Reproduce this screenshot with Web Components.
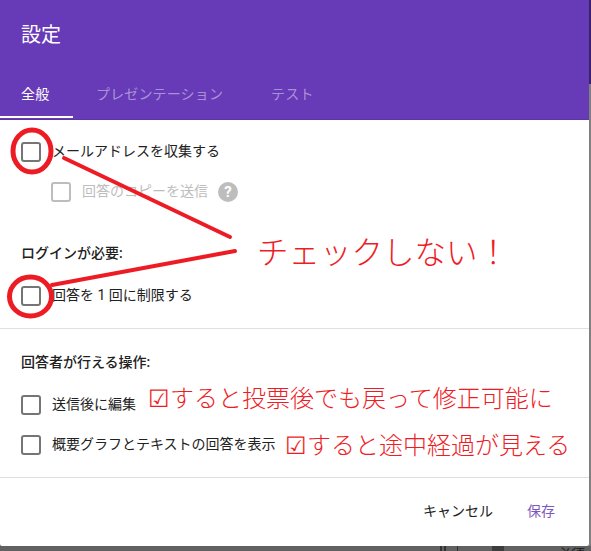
<!DOCTYPE html>
<html lang="ja"><head><meta charset="utf-8">
<style>
html,body{margin:0;height:551px;overflow:hidden;background:#616161}
body{font-family:Roboto,"Noto Sans CJK JP",sans-serif;position:relative}
</style></head><body>
<template id="cb-t"><style>
:host{display:flex;align-items:center;height:20px;font-size:14px;color:#212121;gap:var(--gap,11px)}
:host([disabled]){color:#bdbdbd}
.b{width:16px;height:16px;border:2px solid #757575;border-radius:3px;flex:none;background:#fff}
:host([disabled]) .b{border-color:#bdbdbd}
.t{margin-bottom:5px;white-space:nowrap}
</style><span class="b"></span><span class="t"><slot></slot></span><slot name="after"></slot></template>
<script>
class Base extends HTMLElement{constructor(){super();this.attachShadow({mode:'open'})}}
class FormCheck extends Base{constructor(){super();this.shadowRoot.append(document.getElementById('cb-t').content.cloneNode(true))}}
customElements.define('form-check',FormCheck);
class PageBackdrop extends Base{constructor(){super();this.shadowRoot.innerHTML=`<style>
:host{position:absolute;inset:0;overflow:hidden;background:#616161}
i{position:absolute;display:block}
span{position:absolute;left:557px;top:544px;font-size:14px;line-height:20px;color:#212121;white-space:nowrap}
</style>
<i style="left:589px;top:0;width:2px;height:84px;background:#3a2170"></i>
<i style="left:589px;top:84px;width:2px;height:462px;background:#808080"></i>
<i style="left:440px;top:546px;width:2px;height:5px;background:#333"></i>
<i style="left:444px;top:546px;width:2px;height:5px;background:#333"></i>
<i style="left:457px;top:546px;width:1px;height:5px;background:#333"></i>
<i style="left:492px;top:546px;width:12px;height:5px;background:#3d3d3d"></i>
<span>必須</span>`}}
customElements.define('page-backdrop',PageBackdrop);
class SettingsHeader extends Base{constructor(){super();this.shadowRoot.innerHTML=`<style>
:host{display:block;background:#673ab7;height:120px;box-sizing:border-box;color:#fff;border-bottom:1px solid #5e35a8}
h2{margin:0;font-weight:400;font-size:20px;line-height:24px;padding:23px 0 0 21px;height:56px;box-sizing:content-box}
nav{display:flex;height:40px;font-size:14px;letter-spacing:.15px;margin-top:-1px}
a{display:block;box-sizing:border-box;height:40px;padding-top:6px;line-height:20px;color:rgba(255,255,255,.45)}
a.on{color:#fff;width:73px;padding-left:21px;border-bottom:2px solid #fff}
a.p{margin-left:23px}a.t{margin-left:48px}
</style><h2>設定</h2><nav><a class="on">全般</a><a class="p">プレゼンテーション</a><a class="t">テスト</a></nav>`}}
customElements.define('settings-header',SettingsHeader);
class SettingsBody extends Base{constructor(){super();this.shadowRoot.innerHTML=`<style>
:host{display:block;height:358px;box-sizing:border-box;padding-top:22px;border-bottom:1px solid #e0e0e0}
.s{padding:0 21px}
.sub{margin:20px 0 0 30px}
.q{width:20px;height:20px;border-radius:50%;background:#bdbdbd;color:#fff;font:700 15px/20px Roboto,sans-serif;text-align:center;margin-left:-1px;flex:none}
.h{font-size:14px;font-weight:500;color:#212121;line-height:20px}
hr{border:0;border-top:1px solid #e0e0e0;margin:22px 0 0}
</style>
<div class="s"><form-check>メールアドレスを収集する</form-check>
<form-check class="sub" disabled>回答のコピーを送信<span class="q" slot="after">?</span></form-check>
<div class="h" style="margin-top:41px">ログインが必要:</div>
<form-check style="margin-top:23px">回答を 1 回に制限する</form-check></div>
<hr>
<div class="s"><div class="h" style="margin-top:23px">回答者が行える操作:</div>
<form-check style="margin-top:23px">送信後に編集</form-check>
<form-check style="margin-top:20px">概要グラフとテキストの回答を表示</form-check></div>`}}
customElements.define('settings-body',SettingsBody);
class SettingsFooter extends Base{constructor(){super();this.shadowRoot.innerHTML=`<style>
:host{display:flex;justify-content:flex-end;align-items:center;height:66px;box-sizing:border-box;padding:0 34px 2px 0;font-size:14px;gap:34px;color:#212121}
.s{color:#7e57c2}
</style><span>キャンセル</span><span class="s">保存</span>`}}
customElements.define('settings-footer',SettingsFooter);
class MarkupLayer extends Base{constructor(){super();this.shadowRoot.innerHTML=`<style>
:host{position:absolute;inset:0;pointer-events:none;color:#ee1c25;font-family:"Noto Sans CJK JP",sans-serif;font-weight:300}
svg{position:absolute;left:0;top:0}
span{position:absolute;white-space:nowrap;line-height:1}
</style>
<svg width="591" height="551" fill="none" stroke="#ed1c24" stroke-linecap="round">
<ellipse cx="32" cy="151" rx="19" ry="21" stroke-width="5"/>
<ellipse cx="30.5" cy="296.5" rx="21" ry="19.5" stroke-width="5"/>
<path d="M64 158 L230 237" stroke-width="4"/>
<path d="M52 285 L235 251" stroke-width="4"/>
</svg>
<span style="left:257px;top:235px;font-size:31.5px">チェックしない！</span>
<span style="left:148px;top:385px;font-size:24px">☑すると投票後でも戻って修正可能に</span>
<span style="left:285px;top:432px;font-size:24px">☑すると途中経過が見える</span>`}}
customElements.define('markup-layer',MarkupLayer);
class SettingsDialog extends Base{constructor(){super();this.shadowRoot.innerHTML=`<style>
:host{display:block;position:relative;width:589px;height:546px;background:#fff;overflow:hidden;border-radius:0 0 2px 2px}
</style><slot></slot>`}}
customElements.define('settings-dialog',SettingsDialog);
</script>
<page-backdrop></page-backdrop>
<settings-dialog><settings-header></settings-header><settings-body></settings-body><settings-footer></settings-footer></settings-dialog>
<markup-layer></markup-layer>
</body></html>
